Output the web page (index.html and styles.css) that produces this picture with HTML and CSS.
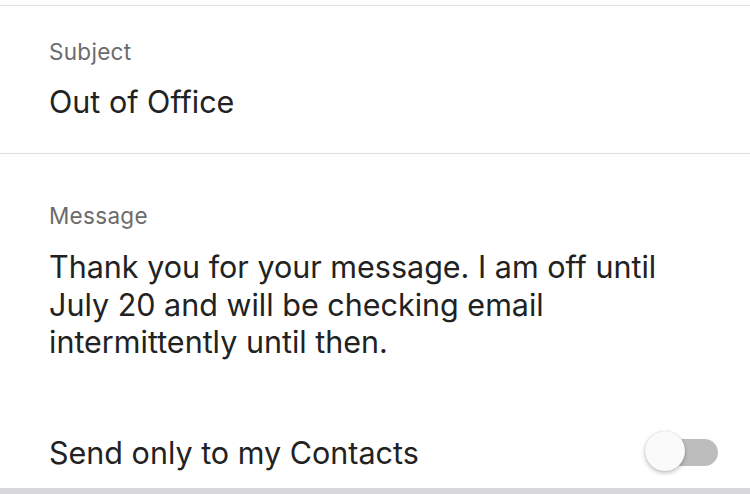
FILE: index.html
```html
<!DOCTYPE html>
<html>
<head>
<meta charset="utf-8">
<link rel="stylesheet" href="styles.css">
</head>
<body>
<div class="screen">
  <section class="field subject">
    <div class="label">Subject</div>
    <div class="value">Out of Office</div>
  </section>
  <section class="field message">
    <div class="label">Message</div>
    <div class="value body">Thank you for your message. I am off until July 20 and will be checking email intermittently until then.</div>
  </section>
  <section class="row">
    <div class="row-text">Send only to my Contacts</div>
    <div class="toggle"><span class="track"></span><span class="knob"></span></div>
  </section>
  <div class="footer-band"></div>
</div>
</body>
</html>
```
FILE: styles.css
```css
html, body {
  margin: 0;
  padding: 0;
  background: #ffffff;
}
body {
  font-family: Inter, "Noto Sans", sans-serif;
  color: #222222;
  width: 750px;
  height: 494px;
  overflow: hidden;
}
.screen {
  display: flex;
  flex-direction: column;
  height: 494px;
  padding-top: 5px;
  box-sizing: border-box;
}
.field {
  border-top: 1px solid #e0e0e0;
  padding-left: 49px;
  padding-right: 30px;
  box-sizing: border-box;
}
.subject {
  height: 148px;
  padding-top: 33px;
}
.message {
  padding-top: 49px;
  height: 263px;
}
.label {
  font-size: 22.5px;
  line-height: 26px;
  letter-spacing: 0.3px;
  color: #6b6b6b;
}
.value {
  font-size: 30.5px;
  line-height: 38px;
  margin-top: 18px;
  color: #222222;
}
.body {
  margin-top: 19px;
  line-height: 37.5px;
  width: 660px;
}
.row {
  flex: 1;
  display: flex;
  align-items: center;
  justify-content: space-between;
  padding-left: 49px;
  padding-right: 32px;
}
.row-text {
  font-size: 30.5px;
  color: #222222;
}
.toggle {
  position: relative;
  width: 73px;
  height: 42px;
}
.track {
  position: absolute;
  left: 2px;
  right: 0;
  top: 8px;
  height: 27px;
  border-radius: 14px;
  background: #bdbdbd;
}
.knob {
  position: absolute;
  left: 0;
  top: 0;
  width: 40px;
  height: 40px;
  border-radius: 50%;
  background: #fafafa;
  box-shadow: 0 2px 4px rgba(0,0,0,0.25), 0 0 1px rgba(0,0,0,0.2);
}
.footer-band {
  height: 6px;
  background: #d8d8dc;
}
```
